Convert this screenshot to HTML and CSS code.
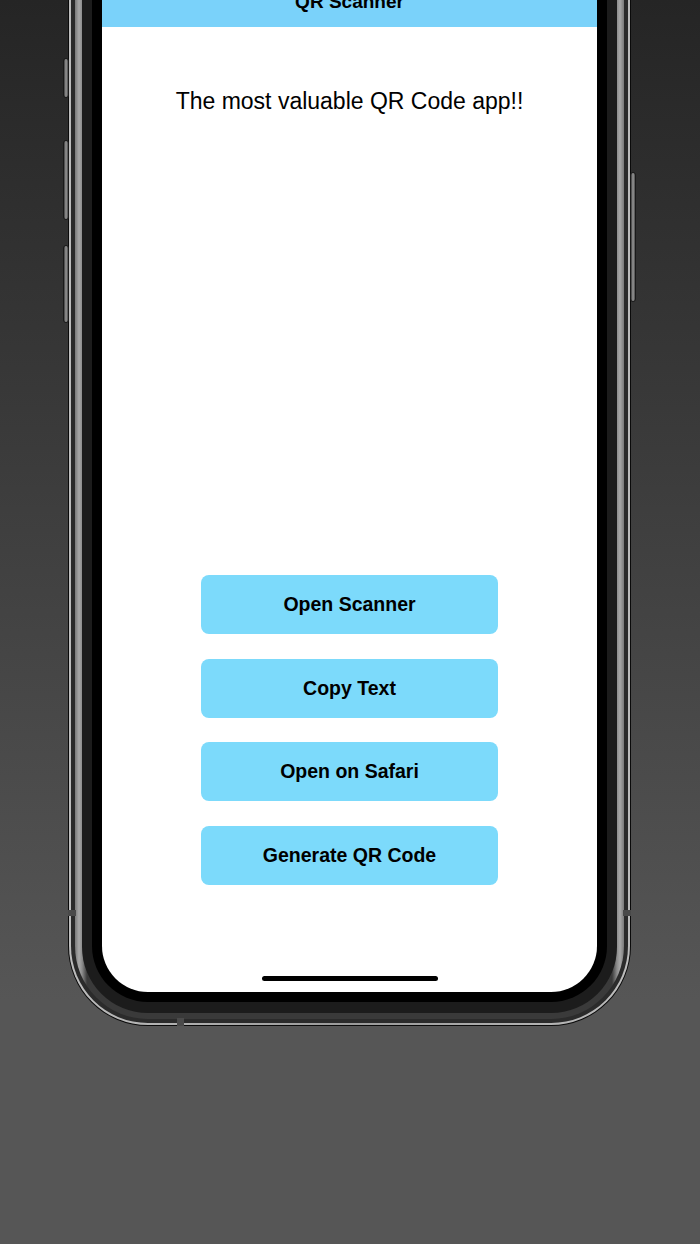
FILE: index.html
```html
<!DOCTYPE html>
<html lang="en">
<head>
<meta charset="utf-8">
<title>QR Scanner</title>
<link rel="stylesheet" href="styles.css">
</head>
<body>
<div class="stage">
  <div class="phone">
    <span class="side-btn btn-silent"></span>
    <span class="side-btn btn-vol-up"></span>
    <span class="side-btn btn-vol-down"></span>
    <span class="side-btn btn-power"></span>
    <span class="antenna ant-left"></span>
    <span class="antenna ant-right"></span>
    <span class="antenna ant-bottom"></span>
    <div class="ring ring1">
      <div class="ring ring2">
        <div class="ring ring3">
          <div class="ring ring4">
            <div class="ring ring5">
              <div class="bezel">
                <div class="screen">
                  <div class="navbar"><span class="nav-title">QR Scanner</span></div>
                  <p class="headline">The most valuable QR Code app!!</p>
                  <div class="actions">
                    <button class="action">Open Scanner</button>
                    <button class="action">Copy Text</button>
                    <button class="action">Open on Safari</button>
                    <button class="action">Generate QR Code</button>
                  </div>
                  <div class="home-indicator"></div>
                </div>
              </div>
            </div>
          </div>
        </div>
      </div>
    </div>
  </div>
</div>
</body>
</html>
```

FILE: styles.css
```css
* { box-sizing: border-box; }

html, body {
  margin: 0;
  padding: 0;
}

body {
  font-family: "Liberation Sans", Arial, sans-serif;
  background: #565656;
}

.stage {
  width: 700px;
  height: 1244px;
  overflow: hidden;
  background: linear-gradient(180deg, #252525 0px, #565656 1000px, #565656 1244px);
}

.phone {
  position: relative;
  width: 563px;
  margin: -200px 0 0 68px;
}

.ring { border-radius: 80px; }
.ring1 { background: #0a0a0a; padding: 1px; border-radius: 80px; }
.ring2 { background: linear-gradient(90deg, #bdbdbd, #9a9a9a 50%, #bdbdbd); padding: 2px; border-radius: 79px; }
.ring3 { background: #2b2b2b; padding: 4px; border-radius: 77px; }
.ring4 {
  background: linear-gradient(90deg, #7a7a7a 0px, #a8a8a8 4px, #8d8d8d 7px, #3a3a3a 12px, #3a3a3a calc(100% - 12px), #8d8d8d calc(100% - 7px), #a8a8a8 calc(100% - 4px), #7a7a7a 100%);
  padding: 7px 7px 6px;
  border-radius: 73px;
}
.ring5 { background: #1c1c1c; padding: 10px 10px 11px; border-radius: 66px; }

.bezel {
  background: #000;
  padding: 10px;
  border-radius: 56px;
}

.screen {
  height: 1158px;
  background: #ffffff;
  border-radius: 46px;
  overflow: hidden;
  display: flex;
  flex-direction: column;
  align-items: center;
}

.navbar {
  width: 100%;
  height: 193px;
  background: #7ad2fa;
  display: flex;
  align-items: flex-end;
  justify-content: center;
  padding-bottom: 14px;
}

.nav-title {
  font-size: 19px;
  line-height: 22px;
  font-weight: 700;
  color: #000;
}

.headline {
  margin: 61px 0 0;
  font-size: 23px;
  line-height: 27px;
  font-weight: 400;
  color: #000;
  text-align: center;
}

.actions {
  margin-top: 460px;
  width: 297px;
  display: flex;
  flex-direction: column;
  gap: 24.7px;
}

.action {
  height: 59px;
  border: none;
  border-radius: 8px;
  background: #7cdafb;
  color: #000;
  font-family: "Liberation Sans", Arial, sans-serif;
  font-size: 19.5px;
  font-weight: 700;
  padding: 0;
  display: flex;
  align-items: center;
  justify-content: center;
}

.home-indicator {
  margin-top: 91px;
  width: 176px;
  height: 5px;
  border-radius: 3px;
  background: #000;
}

/* hardware buttons overlaying the frame edge */
.side-btn {
  position: absolute;
  width: 6px;
  border-radius: 3px;
  background: linear-gradient(90deg, #3a3a3a, #9a9a9a 50%, #4a4a4a);
  border: 1px solid #1a1a1a;
}
.btn-silent { left: -5px; top: 258px; height: 40px; }
.btn-vol-up { left: -5px; top: 340px; height: 80px; }
.btn-vol-down { left: -5px; top: 445px; height: 78px; }
.btn-power { right: -5px; top: 372px; height: 130px; }

.antenna {
  position: absolute;
  background: #4a4a4a;
  z-index: 2;
}
.ant-left { left: 0; top: 1110px; width: 8px; height: 6px; }
.ant-right { right: 0; top: 1110px; width: 8px; height: 6px; }
.ant-bottom { left: 109px; bottom: 0; width: 7px; height: 8px; }
```
